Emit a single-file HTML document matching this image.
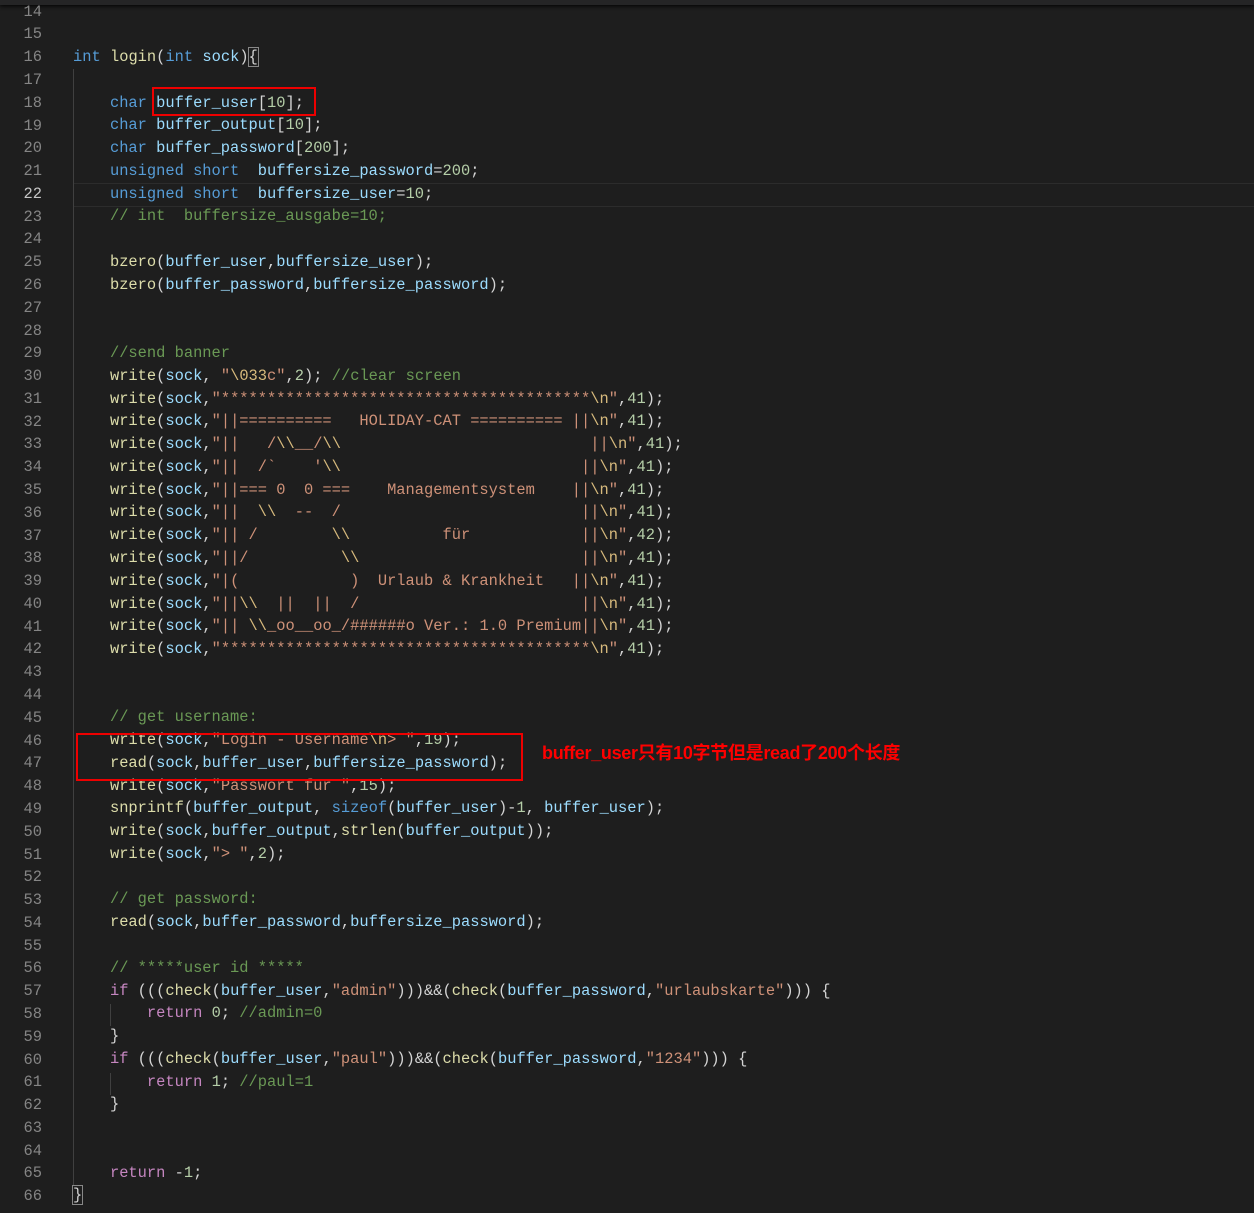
<!DOCTYPE html>
<html><head><meta charset="utf-8"><style>
body{margin:0;background:#1e1e1e;width:1254px;height:1213px;overflow:hidden;position:relative;font-family:"Liberation Mono","Noto Sans CJK SC",monospace;}
.top{position:absolute;left:0;top:0;width:1254px;height:5px;background:#252526;box-shadow:0 1px 4px #000;}
.ln{position:absolute;left:0;width:42px;text-align:right;color:#858585;font-size:15.4px;line-height:22.78px;}
.code{position:absolute;left:73px;font-size:15.4px;line-height:22.78px;color:#d4d4d4;}
.l{height:22.78px;white-space:pre;}
.k{color:#569cd6}.f{color:#dcdcaa}.v{color:#9cdcfe}.s{color:#ce9178}.n{color:#b5cea8}.c{color:#6a9955}.p{color:#c586c0}.e{color:#d7ba7d}
.guide{position:absolute;background:#404040;width:1px;}
.box{position:absolute;border:2px solid #e00;}
.note{position:absolute;left:542px;top:739px;color:#f00;font-weight:bold;font-size:18px;font-family:"Liberation Sans","Noto Sans CJK SC",sans-serif;white-space:nowrap;letter-spacing:-0.3px;}
</style></head><body>
<div class="top"></div>
<div style="position:absolute;left:73px;top:183px;width:1181px;height:22px;border-top:1px solid #2c2c2c;border-bottom:1px solid #2c2c2c;"></div>
<div class="guide" style="left:73px;top:69px;height:1117px;"></div>
<div class="guide" style="left:110px;top:1004px;height:22px;"></div>
<div class="guide" style="left:110px;top:1073px;height:22px;"></div>
<div class="ln" style="top:0.6px">14<br>15<br>16<br>17<br>18<br>19<br>20<br>21<br><span style="color:#c6c6c6">22</span><br>23<br>24<br>25<br>26<br>27<br>28<br>29<br>30<br>31<br>32<br>33<br>34<br>35<br>36<br>37<br>38<br>39<br>40<br>41<br>42<br>43<br>44<br>45<br>46<br>47<br>48<br>49<br>50<br>51<br>52<br>53<br>54<br>55<br>56<br>57<br>58<br>59<br>60<br>61<br>62<br>63<br>64<br>65<br>66</div>
<div class="code" style="top:0.6px"><div class="l"> </div><div class="l"> </div><div class="l"><span class="k">int</span> <span class="f">login</span>(<span class="k">int</span> <span class="v">sock</span>)<span style="outline:1px solid #888">{</span></div><div class="l"> </div><div class="l">    <span class="k">char</span> <span class="v">buffer_user</span>[<span class="n">10</span>];</div><div class="l">    <span class="k">char</span> <span class="v">buffer_output</span>[<span class="n">10</span>];</div><div class="l">    <span class="k">char</span> <span class="v">buffer_password</span>[<span class="n">200</span>];</div><div class="l">    <span class="k">unsigned short</span>  <span class="v">buffersize_password</span>=<span class="n">200</span>;</div><div class="l">    <span class="k">unsigned short</span>  <span class="v">buffersize_user</span>=<span class="n">10</span>;</div><div class="l">    <span class="c">// int  buffersize_ausgabe=10;</span></div><div class="l"> </div><div class="l">    <span class="f">bzero</span>(<span class="v">buffer_user</span>,<span class="v">buffersize_user</span>);</div><div class="l">    <span class="f">bzero</span>(<span class="v">buffer_password</span>,<span class="v">buffersize_password</span>);</div><div class="l"> </div><div class="l"> </div><div class="l">    <span class="c">//send banner</span></div><div class="l">    <span class="f">write</span>(<span class="v">sock</span>, <span class="s">"<span class="e">\033</span>c"</span>,<span class="n">2</span>); <span class="c">//clear screen</span></div><div class="l">    <span class="f">write</span>(<span class="v">sock</span>,<span class="s">"****************************************<span class="e">\n</span>"</span>,<span class="n">41</span>);</div><div class="l">    <span class="f">write</span>(<span class="v">sock</span>,<span class="s">"||==========   HOLIDAY-CAT ========== ||<span class="e">\n</span>"</span>,<span class="n">41</span>);</div><div class="l">    <span class="f">write</span>(<span class="v">sock</span>,<span class="s">"||   /<span class="e">\\</span>__/<span class="e">\\</span>                           ||<span class="e">\n</span>"</span>,<span class="n">41</span>);</div><div class="l">    <span class="f">write</span>(<span class="v">sock</span>,<span class="s">"||  /`    '<span class="e">\\</span>                          ||<span class="e">\n</span>"</span>,<span class="n">41</span>);</div><div class="l">    <span class="f">write</span>(<span class="v">sock</span>,<span class="s">"||=== 0  0 ===    Managementsystem    ||<span class="e">\n</span>"</span>,<span class="n">41</span>);</div><div class="l">    <span class="f">write</span>(<span class="v">sock</span>,<span class="s">"||  <span class="e">\\</span>  --  /                          ||<span class="e">\n</span>"</span>,<span class="n">41</span>);</div><div class="l">    <span class="f">write</span>(<span class="v">sock</span>,<span class="s">"|| /        <span class="e">\\</span>          für            ||<span class="e">\n</span>"</span>,<span class="n">42</span>);</div><div class="l">    <span class="f">write</span>(<span class="v">sock</span>,<span class="s">"||/          <span class="e">\\</span>                        ||<span class="e">\n</span>"</span>,<span class="n">41</span>);</div><div class="l">    <span class="f">write</span>(<span class="v">sock</span>,<span class="s">"|(            )  Urlaub &amp; Krankheit   ||<span class="e">\n</span>"</span>,<span class="n">41</span>);</div><div class="l">    <span class="f">write</span>(<span class="v">sock</span>,<span class="s">"||<span class="e">\\</span>  ||  ||  /                        ||<span class="e">\n</span>"</span>,<span class="n">41</span>);</div><div class="l">    <span class="f">write</span>(<span class="v">sock</span>,<span class="s">"|| <span class="e">\\</span>_oo__oo_/######o Ver.: 1.0 Premium||<span class="e">\n</span>"</span>,<span class="n">41</span>);</div><div class="l">    <span class="f">write</span>(<span class="v">sock</span>,<span class="s">"****************************************<span class="e">\n</span>"</span>,<span class="n">41</span>);</div><div class="l"> </div><div class="l"> </div><div class="l">    <span class="c">// get username:</span></div><div class="l">    <span class="f">write</span>(<span class="v">sock</span>,<span class="s">"Login - Username<span class="e">\n</span>&gt; "</span>,<span class="n">19</span>);</div><div class="l">    <span class="f">read</span>(<span class="v">sock</span>,<span class="v">buffer_user</span>,<span class="v">buffersize_password</span>);</div><div class="l">    <span class="f">write</span>(<span class="v">sock</span>,<span class="s">"Passwort für "</span>,<span class="n">15</span>);</div><div class="l">    <span class="f">snprintf</span>(<span class="v">buffer_output</span>, <span class="k">sizeof</span>(<span class="v">buffer_user</span>)-<span class="n">1</span>, <span class="v">buffer_user</span>);</div><div class="l">    <span class="f">write</span>(<span class="v">sock</span>,<span class="v">buffer_output</span>,<span class="f">strlen</span>(<span class="v">buffer_output</span>));</div><div class="l">    <span class="f">write</span>(<span class="v">sock</span>,<span class="s">"&gt; "</span>,<span class="n">2</span>);</div><div class="l"> </div><div class="l">    <span class="c">// get password:</span></div><div class="l">    <span class="f">read</span>(<span class="v">sock</span>,<span class="v">buffer_password</span>,<span class="v">buffersize_password</span>);</div><div class="l"> </div><div class="l">    <span class="c">// *****user id *****</span></div><div class="l">    <span class="p">if</span> (((<span class="f">check</span>(<span class="v">buffer_user</span>,<span class="s">"admin"</span>)))&amp;&amp;(<span class="f">check</span>(<span class="v">buffer_password</span>,<span class="s">"urlaubskarte"</span>))) {</div><div class="l">        <span class="p">return</span> <span class="n">0</span>; <span class="c">//admin=0</span></div><div class="l">    }</div><div class="l">    <span class="p">if</span> (((<span class="f">check</span>(<span class="v">buffer_user</span>,<span class="s">"paul"</span>)))&amp;&amp;(<span class="f">check</span>(<span class="v">buffer_password</span>,<span class="s">"1234"</span>))) {</div><div class="l">        <span class="p">return</span> <span class="n">1</span>; <span class="c">//paul=1</span></div><div class="l">    }</div><div class="l"> </div><div class="l"> </div><div class="l">    <span class="p">return</span> -<span class="n">1</span>;</div><div class="l"><span style="outline:1px solid #888">}</span></div></div>
<div class="box" style="left:152px;top:87px;width:160px;height:25px;"></div>
<div class="box" style="left:76px;top:733px;width:443px;height:44px;"></div>
<div class="note">buffer_user只有10字节但是read了200个长度</div>
</body></html>
